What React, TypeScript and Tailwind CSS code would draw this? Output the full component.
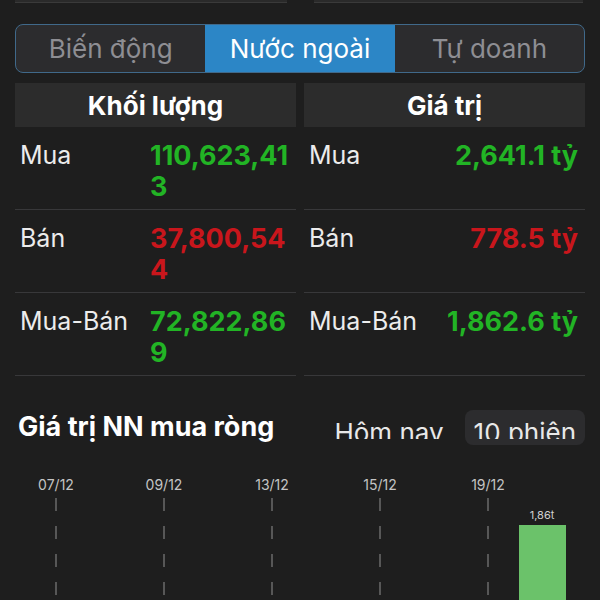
import React from 'react';

const rowsLeft = [
  { label: 'Mua', value: '110,623,413', color: 'text-[#22b425]' },
  { label: 'Bán', value: '37,800,544', color: 'text-[#c9161c]' },
  { label: 'Mua-Bán', value: '72,822,869', color: 'text-[#22b425]' },
];

const rowsRight = [
  { label: 'Mua', value: '2,641.1 tỷ', color: 'text-[#22b425]' },
  { label: 'Bán', value: '778.5 tỷ', color: 'text-[#c9161c]' },
  { label: 'Mua-Bán', value: '1,862.6 tỷ', color: 'text-[#22b425]' },
];

const sessions = [
  { date: '07/12' },
  { date: '' },
  { date: '09/12' },
  { date: '' },
  { date: '13/12' },
  { date: '' },
  { date: '15/12' },
  { date: '' },
  { date: '19/12' },
  { date: '', bar: '1,86t' },
];

function DashedLine() {
  return (
    <svg width="4" height="110" className="block">
      <line x1="2" y1="0" x2="2" y2="110" stroke="#6b6b6b" strokeWidth="1.5" strokeDasharray="13 15" />
    </svg>
  );
}

export default function App() {
  return (
    <div className="w-[600px] h-[600px] overflow-hidden bg-[#1e1e1e] font-['Inter','Liberation_Sans',sans-serif] text-white">
      {/* cards cut off at the top */}
      <div className="flex pl-[15px]">
        <div className="w-[272px] h-[3px] bg-[#2a2a2a] border-b border-[#3a3a3a]" />
        <div className="ml-[27px] w-[269px] h-[3px] bg-[#2a2a2a] border-b border-[#3a3a3a]" />
      </div>

      {/* segmented control */}
      <div className="mx-[15px] mt-[21px] h-[49px] grid grid-cols-3 rounded-lg border-[1.5px] border-[#40698a] overflow-hidden bg-[#2c2c2e]">
        <div className="flex items-center justify-center text-[26px] text-[#8e8e93]">Biến động</div>
        <div className="flex items-center justify-center text-[26px] text-white bg-[#2c86c6]">Nước ngoài</div>
        <div className="flex items-center justify-center text-[26px] text-[#8e8e93]">Tự doanh</div>
      </div>

      {/* headers */}
      <div className="mt-[10px] px-[15px] grid grid-cols-2 gap-2">
        <div className="h-[44px] flex items-center justify-center bg-[#2c2c2c] text-[26px] font-bold">Khối lượng</div>
        <div className="h-[44px] flex items-center justify-center bg-[#2c2c2c] text-[26px] font-bold">Giá trị</div>
      </div>

      {/* table */}
      <div className="px-[15px] grid grid-cols-2 gap-x-2">
        <div className="flex flex-col">
          {rowsLeft.map((r) => (
            <div key={r.label} className="h-[83px] flex border-b border-[#38383a] pt-[13px] leading-[31px]">
              <div className="w-[135px] pl-[5px] text-[25px] text-[#ececec]">{r.label}</div>
              <div className={`w-[146px] break-all text-[27px] font-bold ${r.color}`}>{r.value}</div>
            </div>
          ))}
        </div>
        <div className="flex flex-col">
          {rowsRight.map((r) => (
            <div key={r.label} className="h-[83px] flex justify-between border-b border-[#38383a] pt-[13px] pl-[5px] pr-[7px] leading-[31px]">
              <div className="text-[25px] text-[#ececec]">{r.label}</div>
              <div className={`text-[27px] font-bold ${r.color}`}>{r.value}</div>
            </div>
          ))}
        </div>
      </div>

      {/* net buy section */}
      <div className="mt-[34px] pl-[18px] pr-[15px] flex items-center justify-between h-[35px]">
        <div className="text-[27px] font-bold">Giá trị NN mua ròng</div>
        <div className="flex items-center gap-3">
          <div className="h-[35px] px-[9px] pt-[10px] rounded-lg">
            <div className="h-[19px] overflow-hidden text-[26px] leading-[26px] text-[#e8e8e8]">Hôm nay</div>
          </div>
          <div className="h-[35px] px-[9px] pt-[10px] rounded-lg bg-[#2c2c2e]">
            <div className="h-[19px] overflow-hidden text-[26px] leading-[26px] text-[#e8e8e8]">10 phiên</div>
          </div>
        </div>
      </div>

      {/* chart */}
      <div className="mt-[31px] ml-[29px] grid grid-cols-[repeat(10,54px)]">
        {sessions.map((s, i) => (
          <div key={i} className="flex flex-col items-center">
            <div className="h-[18px] text-[14px] leading-[18px] text-[#c4c4c4]">{s.date}</div>
            {s.date && (
              <div className="mt-[4px]">
                <DashedLine />
              </div>
            )}
            {s.bar && (
              <div className="mt-[14px] flex flex-col items-center">
                <div className="text-[11px] leading-[14px] text-[#d0d0d0]">{s.bar}</div>
                <div className="mt-[3px] w-[47px] h-[80px] bg-[#6bc26a]" />
              </div>
            )}
          </div>
        ))}
      </div>
    </div>
  );
}
